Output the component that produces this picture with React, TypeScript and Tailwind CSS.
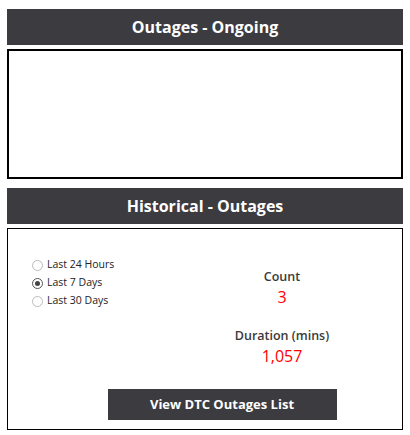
import { useState } from "react";

const ranges = ["Last 24 Hours", "Last 7 Days", "Last 30 Days"];

function Header({ title }: { title: string }) {
  return (
    <div className="h-9 bg-[#3c3b40] flex items-center justify-center text-white text-[16px] font-bold">
      {title}
    </div>
  );
}

export default function App() {
  const [range, setRange] = useState("Last 7 Days");

  return (
    <div
      className="w-[410px] h-[435px] bg-white px-[7px] pt-[9px]"
      style={{ fontFamily: '"Open Sans", "Noto Sans", sans-serif' }}
    >
      <Header title="Outages - Ongoing" />
      <div className="mt-1 h-[130px] border-2 border-black" />

      <div className="mt-[9px]">
        <Header title="Historical - Outages" />
      </div>
      <div className="mt-1 h-[202px] border border-black flex flex-col">
        <div className="flex flex-1">
          <div className="w-[200px] pl-6 pt-[29px] flex flex-col gap-[4px]">
            {ranges.map((r) => (
              <label
                key={r}
                className="flex items-center gap-[4px] text-[10.5px] text-[#222] cursor-pointer h-[14px]"
                onClick={() => setRange(r)}
              >
                <span
                  className={
                    "w-[11px] h-[11px] rounded-full border flex items-center justify-center " +
                    (range === r ? "border-[#555]" : "border-[#bbb]")
                  }
                >
                  {range === r && <span className="w-[5px] h-[5px] rounded-full bg-[#444]" />}
                </span>
                {r}
              </label>
            ))}
          </div>
          <div className="flex-1 flex flex-col items-center pt-[39px] pr-[46px]">
            <div className="text-[12.5px] font-semibold text-[#3a3a3a] leading-[18px]">Count</div>
            <div className="text-[16px] text-[#ff0000] leading-[22px]">3</div>
            <div className="mt-[19px] text-[12.5px] font-semibold text-[#3a3a3a] leading-[18px]">Duration (mins)</div>
            <div className="text-[16px] text-[#ff0000] leading-[22px]">1,057</div>
          </div>
        </div>
        <div className="flex justify-center pl-[34px] pb-[9px]">
          <button className="w-[229px] h-[31px] bg-[#3c3b40] text-white text-[13px] font-bold">
            View DTC Outages List
          </button>
        </div>
      </div>
    </div>
  );
}
